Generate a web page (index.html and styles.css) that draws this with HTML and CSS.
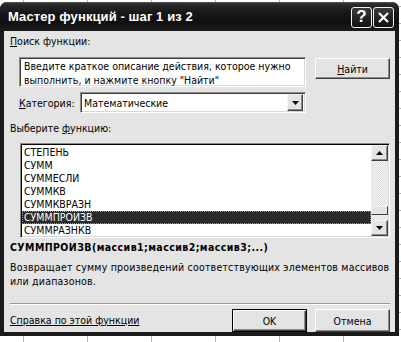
FILE: index.html
```html
<!DOCTYPE html>
<html lang="ru">
<head>
  <meta charset="utf-8">
  <title>Мастер функций - шаг 1 из 2</title>
  <link rel="stylesheet" href="styles.css">
</head>
<body>
  <div class="window">
    <div class="titlebar">
      <span class="title">Мастер функций - шаг 1 из 2</span>
      <div class="caption-btns">
        <span class="cbtn help">?</span>
        <span class="cbtn close">
          <svg width="13" height="13" viewBox="0 0 13 13"><path d="M2 2 L11 11 M11 2 L2 11" stroke="#fff" stroke-width="2.2" fill="none"/></svg>
        </span>
      </div>
    </div>

    <div class="content">
      <div class="label"><u>П</u>оиск функции:</div>

      <div class="search-row">
        <div class="field search-field">Введите краткое описание действия, которое нужно<br>выполнить, и нажмите кнопку "Найти"</div>
        <span class="btn find-btn"><u>Н</u>айти</span>
      </div>

      <div class="cat-row">
        <span class="cat-label"><u>К</u>атегория:</span>
        <div class="field select">
          <span>Математические</span>
          <span class="drop"><svg width="7" height="4" viewBox="0 0 7 4"><path d="M0 0 H7 L3.5 4 Z" fill="#000"/></svg></span>
        </div>
      </div>

      <div class="label label-list">Выберите <u>ф</u>ункцию:</div>

      <div class="listbox">
        <ul class="items">
          <li>СТЕПЕНЬ</li>
          <li>СУММ</li>
          <li>СУММЕСЛИ</li>
          <li>СУММКВ</li>
          <li>СУММКВРАЗН</li>
          <li class="selected">СУММПРОИЗВ</li>
          <li>СУММРАЗНКВ</li>
        </ul>
        <div class="scrollbar">
          <span class="sb-btn"><svg width="7" height="4" viewBox="0 0 7 4"><path d="M0 4 H7 L3.5 0 Z" fill="#000"/></svg></span>
          <div class="sb-track"><span class="sb-thumb"></span></div>
          <span class="sb-btn"><svg width="7" height="4" viewBox="0 0 7 4"><path d="M0 0 H7 L3.5 4 Z" fill="#000"/></svg></span>
        </div>
      </div>

      <div class="signature">СУММПРОИЗВ(массив1;массив2;массив3;...)</div>
      <p class="desc">Возвращает сумму произведений соответствующих элементов массивов<br>или диапазонов.</p>

      <div class="separator"></div>

      <div class="footer">
        <a class="help-link" href="#">Справка по этой функции</a>
        <span class="btn default">OK</span>
        <span class="btn">Отмена</span>
      </div>
    </div>
  </div>
</body>
</html>
```

FILE: styles.css
```css
:root {
  --face: #e4e4e4;
  --frame: #1a1a1a;
  --shadow: #8a8a8a;
  --dark: #404040;
  --font: "DejaVu Sans Condensed", "Liberation Sans", sans-serif;
}
* { box-sizing: border-box; margin: 0; padding: 0; }
html, body { height: 100%; }
body {
  font-family: var(--font);
  font-size: 10.5px;
  color: #000;
  background-color: #fff;
  /* spreadsheet grid peeking out behind the dialog */
  background-image:
    repeating-linear-gradient(90deg, transparent 0 23px, #b0b0b0 23px 24px, transparent 24px 64px),
    repeating-linear-gradient(180deg, transparent 0 6px, #b0b0b0 6px 7px, transparent 7px 17px);
  padding-top: 2px;
  overflow: hidden;
}
.window {
  width: 399px;
  height: 334px;
  background: var(--frame);
  border-radius: 7px 7px 0 0;
  padding: 0 4px 4px;
  display: flex;
  flex-direction: column;
}
/* title bar */
.titlebar {
  height: 29px;
  margin: 0 -4px;
  padding: 0 5px 0 8px;
  border-radius: 7px 7px 0 0;
  background: linear-gradient(#555 0, #2a2a2a 2px, #161616 40%, #101010 70%, #1c1c1c 100%);
  display: flex;
  align-items: center;
  justify-content: space-between;
}
.title {
  color: #fff;
  font-family: "Liberation Sans", sans-serif;
  font-weight: bold;
  font-size: 13px;
  letter-spacing: 0.1px;
}
.caption-btns {
  display: flex;
  gap: 1px;
  margin-top: 1px;
}
.cbtn {
  width: 21px;
  height: 21px;
  border: 1px solid #f2f2f2;
  border-radius: 3px;
  background: linear-gradient(#3a3a3a, #111);
  color: #fff;
  display: flex;
  align-items: center;
  justify-content: center;
}
.cbtn.help {
  font-family: "Liberation Sans", sans-serif;
  font-weight: bold;
  font-size: 17px;
}
/* dialog body */
.content {
  flex: 1;
  background: var(--face);
  padding: 4px 5px 0 6px;
  display: flex;
  flex-direction: column;
}
.label {
  line-height: 13px;
}
u { text-decoration: underline; text-underline-offset: 1px; }

.field {
  background: #fff;
  border: 1px solid;
  border-color: var(--shadow) #fff #fff var(--shadow);
  box-shadow: inset 1px 1px 0 var(--dark), inset -1px -1px 0 #d8d8d8;
}
.search-row {
  display: flex;
  align-items: flex-start;
  margin: 9px 0 0 9px;
}
.search-field {
  width: 288px;
  height: 30px;
  padding: 1px 0 0 4px;
  line-height: 14px;
  white-space: nowrap;
  overflow: hidden;
}
.btn {
  display: flex;
  align-items: center;
  justify-content: center;
  background: var(--face);
  border: 1px solid;
  border-color: #fff #404040 #404040 #fff;
  box-shadow: inset -1px -1px 0 var(--shadow);
}
.find-btn {
  width: 75px;
  height: 21px;
  margin: 1px 0 0 9px;
}
.cat-row {
  display: flex;
  align-items: center;
  margin: 5px 0 0 9px;
}
.cat-label {
  width: 61px;
}
.select {
  width: 226px;
  height: 21px;
  display: flex;
  align-items: center;
  justify-content: space-between;
  padding: 0 2px 0 3px;
}
.drop {
  width: 16px;
  height: 17px;
  background: var(--face);
  border: 1px solid;
  border-color: #f4f4f4 #404040 #404040 #f4f4f4;
  box-shadow: inset -1px -1px 0 var(--shadow);
  display: flex;
  align-items: center;
  justify-content: center;
}
.label-list {
  margin-top: 9px;
}
/* function list */
.listbox {
  width: 370px;
  height: 95px;
  margin: 8px 0 0 10px;
  display: flex;
  background: #fff;
  border: 1px solid;
  border-color: var(--shadow) #fff #fff var(--shadow);
  box-shadow: inset 1px 1px 0 #000, inset -1px -1px 0 #d8d8d8;
  padding: 1px;
}
.items {
  flex: 1;
  list-style: none;
  padding-top: 1px;
}
.items li {
  height: 13px;
  line-height: 13px;
  padding-left: 2px;
}
.items li.selected {
  background: #2a2a2a;
  color: #fff;
  outline: 1px dotted #9a9a9a;
  outline-offset: -1px;
}
.scrollbar {
  width: 17px;
  display: flex;
  flex-direction: column;
  background: repeating-conic-gradient(#f4f4f4 0 25%, #e0e0e0 0 50%) 0 0 / 2px 2px;
}
.sb-btn {
  height: 16px;
  display: flex;
  align-items: center;
  justify-content: center;
  background: var(--face);
  border: 1px solid;
  border-color: #f4f4f4 #404040 #404040 #f4f4f4;
  box-shadow: inset -1px -1px 0 var(--shadow);
}
.sb-track {
  flex: 1;
  display: flex;
  flex-direction: column;
}
.sb-thumb {
  height: 9px;
  margin: auto 0 5px;
  background: var(--face);
  border: 1px solid;
  border-color: #f4f4f4 #404040 #404040 #f4f4f4;
}
.signature {
  font-weight: bold;
  line-height: 13px;
  margin-top: 3px;
  letter-spacing: 0.42px;
}
.desc {
  line-height: 14px;
  margin-top: 6px;
  white-space: nowrap;
  letter-spacing: 0.2px;
}
.separator {
  height: 2px;
  width: 380px;
  margin-top: 15px;
  border-top: 1px solid #9a9a9a;
  border-bottom: 1px solid #fff;
}
.footer {
  display: flex;
  align-items: center;
  margin-top: 4px;
}
.help-link {
  color: #000;
  flex: 1;
  margin-top: -2px;
}
.footer .btn {
  width: 75px;
  height: 23px;
  margin-left: 8px;
}
.btn.default {
  border: 1px solid #000;
  box-shadow: inset 1px 1px 0 #fff, inset -1px -1px 0 #404040, inset -2px -2px 0 var(--shadow);
}
```
